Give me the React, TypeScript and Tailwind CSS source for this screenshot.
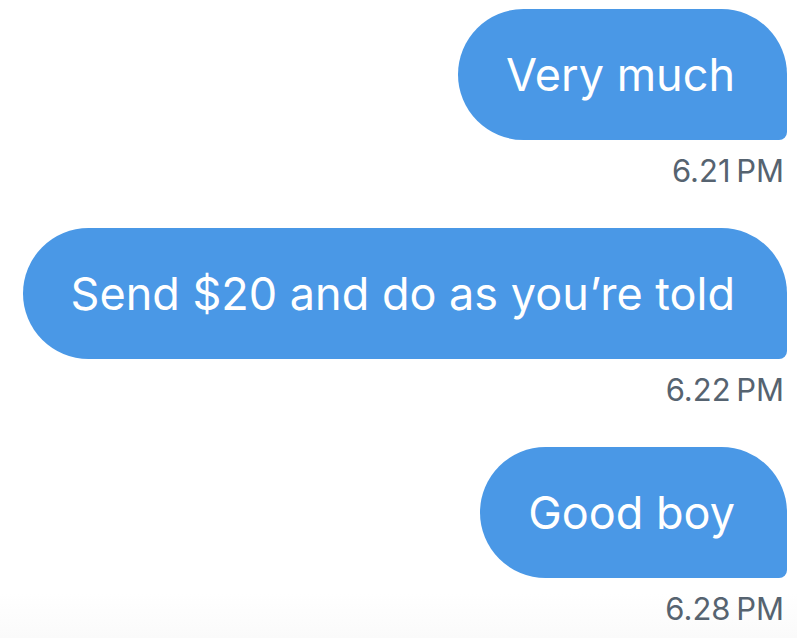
const messages = [
  { text: "Very much", time: "6.21" },
  { text: "Send $20 and do as you’re told", time: "6.22" },
  { text: "Good boy", time: "6.28" },
];

function Bubble({ text, time }: { text: string; time: string }) {
  return (
    <div className="flex flex-col items-end mb-[39px]">
      <div className="h-[131px] flex items-center pl-[48px] pr-[52px] bg-[#4a98e6] text-white text-[45px] leading-none rounded-[66px] rounded-br-[8px] whitespace-nowrap">
        {text}
      </div>
      <p className="mt-[13px] mr-[3px] h-[36px] leading-[36px] text-[31px] text-[#566370] whitespace-nowrap">
        {time}
        {"\u2009"}PM
      </p>
    </div>
  );
}

export default function App() {
  return (
    <div
      className="w-[797px] h-[638px] overflow-hidden bg-[linear-gradient(to_bottom,#ffffff_93%,#fafafa)] flex flex-col items-end pt-[9px] pr-[10px]"
      style={{ fontFamily: "Inter, 'Liberation Sans', sans-serif" }}
    >
      {messages.map((m) => (
        <Bubble key={m.time} text={m.text} time={m.time} />
      ))}
    </div>
  );
}
